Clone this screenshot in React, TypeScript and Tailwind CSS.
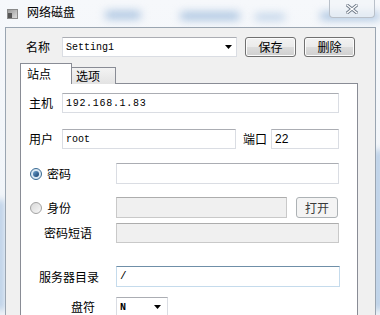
const cjk = { fontFamily: '"Noto Sans CJK SC", "Noto Sans", sans-serif' };
const mono = { fontFamily: '"Liberation Mono", "DejaVu Sans Mono", monospace' };

function Arrow() {
  return (
    <svg width="7" height="4" viewBox="0 0 7 4">
      <path d="M0 0H7L3.5 4Z" fill="#000" />
    </svg>
  );
}

function Radio({ checked }: { checked?: boolean }) {
  return (
    <span
      className={`w-[12px] h-[12px] rounded-full border flex items-center justify-center ${
        checked ? "border-[#3a6b94] bg-[#dbe8f3]" : "border-[#a2a2a2] bg-gradient-to-br from-[#d8d8d8] to-[#f8f8f8]"
      }`}
    >
      {checked && (
        <span className="w-[6px] h-[6px] rounded-full bg-gradient-to-br from-[#6fa3cf] to-[#143f6d]" />
      )}
    </span>
  );
}

function Button({ label, w }: { label: string; w: string }) {
  return (
    <button
      className={`${w} h-[20px] rounded-[3px] border border-[#707070] text-[12px] leading-none text-black flex items-center justify-center bg-[linear-gradient(#f2f2f2_0%,#ebebeb_50%,#dddddd_50%,#cfcfcf_100%)] shadow-[inset_0_0_0_1px_#fcfcfc]`}
      style={cjk}
    >
      {label}
    </button>
  );
}

function Input({
  w,
  h = "h-[20px]",
  value,
  disabled,
  focus,
  valueStyle,
  valueClass = "",
}: {
  w: string;
  h?: string;
  value?: string;
  disabled?: boolean;
  focus?: boolean;
  valueStyle?: React.CSSProperties;
  valueClass?: string;
}) {
  const border = focus
    ? "border-[#c5dbec] border-t-[#6f8fa8]"
    : disabled
    ? "border-[#c9c9c9] border-t-[#adadad]"
    : "border-[#dadde3] border-t-[#abadb3]";
  return (
    <div
      className={`${w} ${h} border ${border} ${disabled ? "bg-[#f0f0f0]" : "bg-white"} flex items-center pl-[3px] text-black`}
    >
      <span className={valueClass} style={valueStyle}>
        {value}
      </span>
    </div>
  );
}

export default function App() {
  return (
    <div
      className="w-[380px] h-[315px] overflow-hidden relative bg-[linear-gradient(180deg,#f6f8fb_0%,#eef3f8_100%)]"
      style={cjk}
    >
      {/* aero glass smudges */}
      <div className="absolute left-[105px] top-[11px] w-[36px] h-[8px] rounded-full bg-[#a9c3e0] blur-[4px]" />
      <div className="absolute left-[180px] top-[12px] w-[60px] h-[8px] rounded-full bg-[#a9c3e0] blur-[4px]" />
      <div className="absolute left-[255px] top-[14px] w-[30px] h-[6px] rounded-full bg-[#b7cde6] blur-[4px]" />
      <div className="absolute left-[320px] top-[12px] w-[60px] h-[8px] rounded-full bg-[#a9c3e0] blur-[4px]" />
      <div className="absolute left-[374px] top-[150px] w-[8px] h-[160px] bg-[#b3cae4] blur-[3px]" />
      <div className="absolute left-[-3px] top-[200px] w-[7px] h-[110px] bg-[#b3cae4] blur-[3px]" />

      {/* title bar */}
      <div className="relative flex h-[27px]">
        <div className="ml-[7px] mt-[9px] w-[11px] h-[10px] bg-gradient-to-br from-[#9a9a9a] to-[#dcdcdc] border border-[#8a8a8a] flex items-end">
          <span className="w-[4px] h-[5px] bg-[#555]" />
        </div>
        <span className="ml-[9px] mt-[4px] text-[12px] leading-[16px] text-black">网络磁盘</span>
        <div className="ml-auto mr-[5px] w-[46px] h-[18px] rounded-b-[4px] border border-t-0 border-[#b9c0c9] bg-[#f2f5f8]/70 flex items-center justify-center">
          <svg width="12" height="10" viewBox="0 0 12 10">
            <path
              d="M1 1L11 9M11 1L1 9"
              stroke="#6e7a88"
              strokeWidth="3.2"
              strokeLinecap="square"
            />
            <path d="M1 1L11 9M11 1L1 9" stroke="#ffffff" strokeWidth="1.4" strokeLinecap="square" />
          </svg>
        </div>
      </div>

      {/* client area */}
      <div className="relative ml-[5px] w-[371px] h-[290px] bg-[#f0f0f0] border border-b-0 border-[#9aa5b1]">
        {/* name row */}
        <div className="flex items-center mt-[9px] pl-[20px] h-[20px]">
          <span className="w-[36px] text-[12px]">名称</span>
          <div className="w-[175px] h-[20px] bg-white border border-[#dadde3] border-t-[#abadb3] flex items-center pl-[3px] pr-[4px]">
            <span className="text-[10px] flex-1" style={mono}>
              Setting1
            </span>
            <Arrow />
          </div>
          <div className="ml-[8px]">
            <Button label="保存" w="w-[51px]" />
          </div>
          <div className="ml-[8px]">
            <Button label="删除" w="w-[51px]" />
          </div>
        </div>

        {/* tabs */}
        <div className="flex items-end ml-[14px] mt-[6px] h-[21px] relative z-10">
          <div className="w-[52px] h-[21px] bg-white border border-b-0 border-[#898c95] pl-[6px] pt-[2px] text-[12px] leading-[16px]">
            站点
          </div>
          <div className="w-[45px] h-[17px] -ml-[1px] border border-b-0 border-[#898c95] bg-gradient-to-b from-[#f3f3f3] to-[#e3e3e3] pl-[4px] text-[12px] leading-[16px]">
            选项
          </div>
        </div>

        {/* tab panel */}
        <div className="ml-[14px] -mt-[1px] w-[338px] h-[240px] bg-white border border-b-0 border-[#898c95] text-[12px]">
          {/* host */}
          <div className="flex items-center mt-[9px] pl-[8px] h-[20px]">
            <span className="w-[33px]">主机</span>
            <Input w="w-[277px]" value="192.168.1.83" valueStyle={mono} valueClass="text-[10px] tracking-[0.7px]" />
          </div>

          {/* user / port */}
          <div className="flex items-center mt-[16px] pl-[8px] h-[20px]">
            <span className="w-[33px]">用户</span>
            <Input w="w-[174px]" value="root" valueStyle={mono} valueClass="text-[10px]" />
            <span className="ml-[7px] w-[28px]">端口</span>
            <Input
              w="w-[68px]"
              value="22"
              valueStyle={{ fontFamily: '"Liberation Sans", Arial, sans-serif' }}
              valueClass="text-[12px]"
            />
          </div>

          {/* password radio */}
          <div className="flex items-center mt-[14px] pl-[9px] h-[21px]">
            <Radio checked />
            <span className="ml-[5px] w-[69px]">密码</span>
            <Input w="w-[223px]" h="h-[21px]" />
          </div>

          {/* identity radio */}
          <div className="flex items-center mt-[13px] pl-[9px] h-[21px]">
            <Radio />
            <span className="ml-[5px] w-[69px]">身份</span>
            <Input w="w-[171px]" h="h-[21px]" disabled />
            <div className="ml-[9px]">
              <button className="w-[42px] h-[21px] rounded-[3px] border border-[#adb2b5] bg-[#f4f4f4] text-[12px] leading-none text-[#3a3a3a] flex items-center justify-center">
                打开
              </button>
            </div>
          </div>

          {/* passphrase */}
          <div className="flex items-center mt-[5px] h-[20px]">
            <span className="pl-[23px] w-[95px]">密码短语</span>
            <Input w="w-[223px]" disabled />
          </div>

          {/* server dir */}
          <div className="flex items-center mt-[23px] h-[21px]">
            <span className="pl-[18px] w-[95px]">服务器目录</span>
            <Input w="w-[224px]" h="h-[21px]" value="/" focus valueStyle={mono} valueClass="text-[11px]" />
          </div>

          {/* drive */}
          <div className="flex items-center mt-[10px] h-[20px]">
            <span className="pl-[50px] w-[95px]">盘符</span>
            <div className="w-[52px] h-[20px] bg-white border border-[#dadde3] border-t-[#abadb3] flex items-center pl-[3px] pr-[6px]">
              <span className="text-[10px] font-bold flex-1" style={mono}>
                N
              </span>
              <Arrow />
            </div>
          </div>
        </div>
      </div>
    </div>
  );
}
